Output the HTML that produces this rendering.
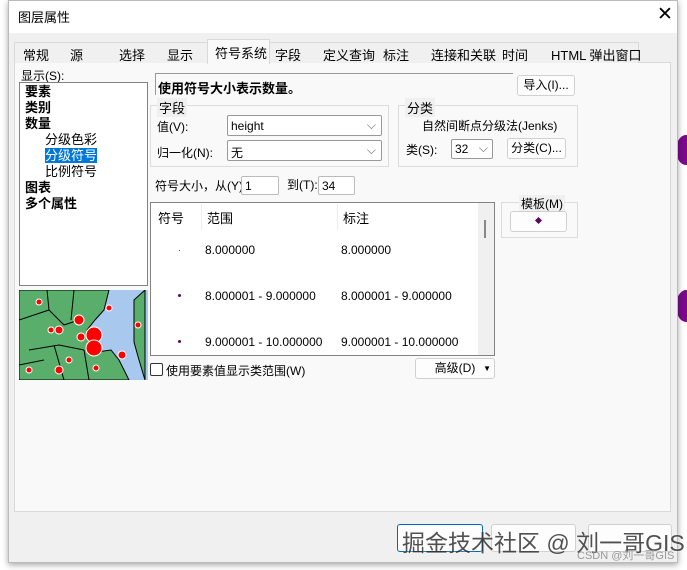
<!DOCTYPE html><html><head><meta charset="utf-8"><style>
*{box-sizing:border-box;margin:0;padding:0}
body{width:687px;height:570px;background:#fff;position:relative;overflow:hidden;font-family:"Liberation Sans","Noto Sans CJK SC",sans-serif;font-size:12px;color:#000}
.a{position:absolute;white-space:nowrap}
.dlg{position:absolute;left:8px;top:0;width:670px;height:563px;background:#f0f0f0;border:1px solid #bbb;box-shadow:0 2px 6px rgba(0,0,0,.35)}
.btn{position:absolute;background:#fdfdfd;border:1px solid #d0d0d0;border-radius:3px;text-align:center}
.inp{position:absolute;background:#fff;border:1px solid #999;border-radius:2px}
.grp{position:absolute;border:1px solid #dcdcdc}
.gl{position:absolute;top:-8px;left:6px;background:#f0f0f0;padding:0 2px}
.dot{position:absolute;background:#5a0a5a;border-radius:50%}
</style></head><body>
<div class="a" style="left:676px;top:135px;width:20px;height:30px;border-radius:50%;background:#7a0a8a"></div>
<div class="a" style="left:676px;top:290px;width:20px;height:32px;border-radius:50%;background:#7a0a8a"></div>
<div class="dlg"></div>
<div class="a" style="left:9px;top:1px;width:668px;height:32px;background:#fff"></div>
<div class="a" style="left:18px;top:7px;font-size:13px">图层属性</div>
<div class="a" style="left:657px;top:3px;font-size:19px;font-weight:300">✕</div>
<!-- tab panel -->
<div class="a" style="left:14px;top:62px;width:657px;height:450px;background:#f9f9f9;border:1px solid #d9d9d9"></div>
<div class="a" style="left:14px;top:42px;width:625px;height:21px;background:#f0f0f0;border:1px solid #d9d9d9;border-bottom:none"></div>
<div class="a" style="left:207px;top:39px;width:63px;height:25px;background:#f9f9f9;border:1px solid #d9d9d9;border-bottom:none"></div>
<div class="a" style="left:23px;top:45px;font-size:13px">常规</div>
<div class="a" style="left:70px;top:45px;font-size:13px">源</div>
<div class="a" style="left:119px;top:45px;font-size:13px">选择</div>
<div class="a" style="left:167px;top:45px;font-size:13px">显示</div>
<div class="a" style="left:215px;top:43px;font-size:13px">符号系统</div>
<div class="a" style="left:275px;top:45px;font-size:13px">字段</div>
<div class="a" style="left:323px;top:45px;font-size:13px">定义查询</div>
<div class="a" style="left:383px;top:45px;font-size:13px">标注</div>
<div class="a" style="left:431px;top:45px;font-size:13px">连接和关联</div>
<div class="a" style="left:502px;top:45px;font-size:13px">时间</div>
<div class="a" style="left:551px;top:45px;font-size:13px">HTML 弹出窗口</div>
<!-- left -->
<div class="a" style="left:21px;top:67px">显示(S):</div>
<div class="a" style="left:19px;top:82px;width:129px;height:204px;background:#fff;border:1px solid #828282"></div>
<div class="a" style="left:25px;top:84px;font-weight:bold;line-height:16px;font-size:13px">要素<br>类别<br>数量</div>
<div class="a" style="left:45px;top:132px;line-height:16px;font-size:13px">分级色彩<br><span style="background:#0078d7;color:#fff">分级符号</span><br>比例符号</div>
<div class="a" style="left:25px;top:180px;font-weight:bold;line-height:16px;font-size:13px">图表<br>多个属性</div>
<svg class="a" style="left:19px;top:290px" width="129" height="90" viewBox="0 0 129 90">
<rect width="129" height="90" fill="#a9c8ee"/>
<path d="M0 0H90L85 20 76 30 68 40 70 55 78 62 92 60 100 70 110 90H0Z" fill="#5aae6c" stroke="#000"/>
<path d="M115 10 126 0V90L120 70 115 52Z" fill="#5aae6c" stroke="#000"/>
<path d="M0 30 30 20 45 35 60 30M10 60 40 55 65 60M30 20 28 0M55 0 52 30M35 55 45 90M65 60 70 90M0 75 25 70" stroke="#000" fill="none"/>
<g fill="red" stroke="#fff"><circle cx="60" cy="30" r="5"/><circle cx="75" cy="45" r="8"/><circle cx="75" cy="58" r="8"/><circle cx="62" cy="47" r="4"/><circle cx="40" cy="40" r="4"/><circle cx="103" cy="65" r="4"/><circle cx="20" cy="12" r="3"/><circle cx="50" cy="70" r="3"/><circle cx="90" cy="18" r="3"/><circle cx="32" cy="40" r="3"/><circle cx="40" cy="80" r="4"/><circle cx="77" cy="78" r="3"/><circle cx="10" cy="80" r="3"/><circle cx="119" cy="35" r="3"/></g></svg>
<!-- header -->
<div class="a" style="left:155px;top:73px;width:358px;height:22px;border-top:1px solid #999;border-left:1px solid #999"></div>
<div class="a" style="left:158px;top:78px;font-weight:bold;font-size:13px">使用符号大小表示数量。</div>
<div class="btn" style="left:517px;top:75px;width:58px;height:21px;line-height:19px">导入(I)...</div>
<div class="grp" style="left:150px;top:105px;width:239px;height:62px"><span class="gl" style="font-size:13px">字段</span></div>
<div class="a" style="left:157px;top:118px">值(V):</div>
<div class="inp" style="left:227px;top:115px;width:155px;height:21px;padding:3px 3px">height<span style="position:absolute;right:5px;top:2px;color:#666">⌵</span></div>
<div class="a" style="left:157px;top:144px">归一化(N):</div>
<div class="inp" style="left:227px;top:140px;width:155px;height:21px;padding:3px 3px">无<span style="position:absolute;right:5px;top:2px;color:#666">⌵</span></div>
<div class="grp" style="left:398px;top:105px;width:180px;height:62px"><span class="gl" style="font-size:13px">分类</span></div>
<div class="a" style="left:422px;top:117px">自然间断点分级法(Jenks)</div>
<div class="a" style="left:406px;top:141px">类(S):</div>
<div class="inp" style="left:451px;top:139px;width:42px;height:20px;padding:2px 3px">32<span style="position:absolute;right:4px;top:1px;color:#666">⌵</span></div>
<div class="btn" style="left:507px;top:138px;width:59px;height:21px;line-height:19px">分类(C)...</div>
<div class="a" style="left:155px;top:177px">符号大小，从(Y)</div>
<div class="inp" style="left:241px;top:176px;width:38px;height:19px;border-color:#bbb;padding:2px 3px">1</div>
<div class="a" style="left:287px;top:176px">到(T):</div>
<div class="inp" style="left:318px;top:176px;width:37px;height:19px;border-color:#bbb;padding:2px 3px">34</div>
<!-- table -->
<div class="a" style="left:150px;top:202px;width:345px;height:154px;background:#fff;border:1px solid #828282"></div>
<div class="a" style="left:478px;top:203px;width:16px;height:152px;background:#f0f0f0"></div>
<div class="a" style="left:484px;top:220px;width:2px;height:18px;background:#888"></div>
<div class="a" style="left:201px;top:204px;width:1px;height:26px;background:#eee"></div>
<div class="a" style="left:337px;top:204px;width:1px;height:26px;background:#eee"></div>
<div class="a" style="left:158px;top:208px;font-size:13px">符号</div>
<div class="a" style="left:207px;top:208px;font-size:13px">范围</div>
<div class="a" style="left:343px;top:208px;font-size:13px">标注</div>
<div class="dot" style="left:179px;top:250px;width:1px;height:1px"></div>
<div class="a" style="left:205px;top:243px">8.000000</div><div class="a" style="left:341px;top:243px">8.000000</div>
<div class="dot" style="left:178px;top:294px;width:3px;height:3px"></div>
<div class="a" style="left:205px;top:289px">8.000001 - 9.000000</div><div class="a" style="left:341px;top:289px">8.000001 - 9.000000</div>
<div class="dot" style="left:178px;top:340px;width:3px;height:3px"></div>
<div class="a" style="left:205px;top:335px">9.000001 - 10.000000</div><div class="a" style="left:341px;top:335px">9.000001 - 10.000000</div>
<div class="grp" style="left:501px;top:202px;width:77px;height:36px"><span class="gl" style="left:17px">模板(M)</span></div>
<div class="btn" style="left:510px;top:211px;width:57px;height:21px"></div>
<div class="dot" style="left:536px;top:218px;width:5px;height:5px;transform:rotate(45deg);border-radius:0"></div>
<div class="a" style="left:150px;top:363px;width:13px;height:13px;border:1px solid #333;border-radius:2px;background:#fff"></div>
<div class="a" style="left:166px;top:362px">使用要素值显示类范围(W)</div>
<div class="btn" style="left:415px;top:358px;width:80px;height:21px;line-height:19px">高级(D)<span style="position:absolute;right:3px;font-size:8px">▼</span></div>
<!-- bottom -->
<div class="btn" style="left:397px;top:524px;width:86px;height:28px;border:1px solid #0067c0"></div>
<div class="btn" style="left:491px;top:524px;width:85px;height:28px"></div>
<div class="btn" style="left:588px;top:524px;width:84px;height:28px"></div>
<div class="a" style="left:402px;top:524px;font-size:23px;color:#333;opacity:.85;text-shadow:0 0 2px #fff">掘金技术社区 @ 刘一哥GIS</div>
<div class="a" style="left:577px;top:547px;font-size:11px;color:#999">CSDN @刘一哥GIS</div>
</body></html>
